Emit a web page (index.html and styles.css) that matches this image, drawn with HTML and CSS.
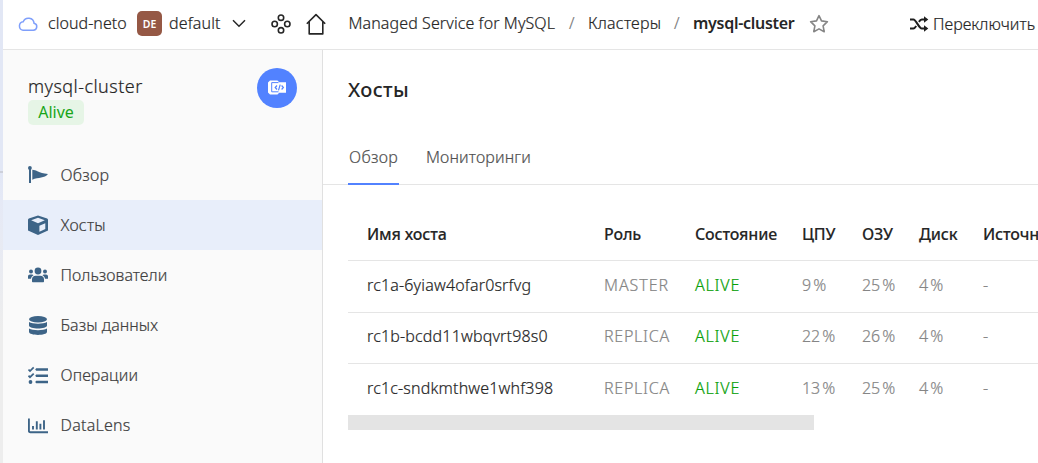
FILE: index.html
```html
<!DOCTYPE html>
<html lang="ru">
<head>
<meta charset="utf-8">
<title>mysql-cluster</title>
<link rel="stylesheet" href="styles.css">
</head>
<body>
<div class="edge"><span class="edge-mark"></span></div>
<div class="app">
  <header class="topbar">
    <svg class="cloud" width="20" height="16" viewBox="0 0 20 16"><path d="M5 14.2h10.2a3.5 3.5 0 0 0 .9-6.9 5.7 5.7 0 0 0-10.9-1.6A4.3 4.3 0 0 0 5 14.2z" fill="none" stroke="#7f9ffb" stroke-width="1.5"/></svg>
    <span class="t-cloud">cloud-neto</span>
    <span class="badge">DE</span>
    <span class="t-default">default</span>
    <svg class="chevron" width="14" height="9" viewBox="0 0 14 9"><path d="M1 1.2l6 6 6-6" fill="none" stroke="#262626" stroke-width="1.5"/></svg>
    <svg class="services" width="20" height="20" viewBox="0 0 20 20"><g fill="none" stroke="#262626" stroke-width="1.6"><circle cx="10" cy="3.7" r="2.7"/><circle cx="3.7" cy="10" r="2.7"/><circle cx="16.3" cy="10" r="2.7"/><circle cx="10" cy="16.3" r="2.7"/></g></svg>
    <svg class="home" width="20" height="22" viewBox="0 0 20 22"><path d="M.8 10.8L10 1.6l9.2 9.2M3.2 8.6v12.300h13.600V8.600" fill="none" stroke="#262626" stroke-width="1.6" stroke-linejoin="round"/></svg>
    <nav class="crumbs">
      <span class="t-service">Managed Service for MySQL</span>
      <span class="slash">/</span>
      <span class="t-clusters">Кластеры</span>
      <span class="slash slash-last">/</span>
      <b class="t-current">mysql-cluster</b>
    </nav>
    <svg class="star" width="20" height="20" viewBox="0 0 20 20"><path d="M10 1.6l2.5 5.3 5.9.8-4.3 4.1 1.1 5.9L10 14.9l-5.2 2.8 1.1-5.9L1.6 7.7l5.9-.8z" fill="none" stroke="#858585" stroke-width="1.6" stroke-linejoin="round"/></svg>
    <svg class="shuffle" width="19" height="16" viewBox="0 0 19 16"><path d="M0 3.500h3.400c2.800 0 5.400 9 8.400 9h3.400M0 12.500h3.400c1.200 0 2-1.100 2.800-2.400M8.900 5.900c.9-1.400 1.700-2.400 2.900-2.400h3.400" fill="none" stroke="#1f1f1f" stroke-width="2"/><path d="M14 .3l4.300 3.200L14 6.700zM14 9.300l4.300 3.200-4.300 3.200z" fill="#1f1f1f"/></svg>
    <span class="t-switch">Переключить</span>
  </header>
  <div class="body">
    <aside class="sidebar">
      <div class="cluster">
        <div>
          <div class="cluster-name">mysql-cluster</div>
          <span class="status">Alive</span>
        </div>
        <div class="logo">
          <svg width="18" height="16" viewBox="0 0 18 16"><path d="M2 .5h7.500l1.700 1.700H18v10.600h-6.800l-1.700 1.700H2L0 12.500v-10z" fill="#fff"/><path d="M10.500 2.600H3.700v9.200h6.800" fill="none" stroke="#5282ff" stroke-width="1"/><path d="M9 5.500L7.200 7.500 9 9.500M13.600 5.500l1.800 2-1.800 2M12.200 4.600l-1.700 5.800" fill="none" stroke="#5282ff" stroke-width="1.200"/></svg>
        </div>
      </div>
      <nav class="menu">
        <a class="item"><svg width="20" height="20" viewBox="0 0 20 20"><circle cx="1.900" cy="3" r="1.900"/><path d="M1 3h2v15H1zM4.300 4.700c4 0 6 3.100 15.700 4.400-3.500 4.600-9.500 3-15.700 5.700z"/></svg><span class="m1">Обзор</span></a>
        <a class="item active"><svg width="20" height="20" viewBox="0 0 20 20"><path fill-rule="evenodd" d="M10 .5l9.200 3 .8 1.100v10.900L10 20 0 15.500V4.600l.8-1.100zM10 2.800L3.200 5.300 10 8.200l6.800-2.900zM11.400 10.800v6l5.900-2.700V8.200z"/></svg><span class="m2">Хосты</span></a>
        <a class="item"><svg width="20" height="20" viewBox="0 0 20 20"><circle cx="10" cy="6" r="3.400"/><circle cx="3" cy="6.500" r="2"/><circle cx="17" cy="6.500" r="2"/><path d="M4 16.500v-2.200c0-2.200 1.500-3.500 3.500-3.500h5c2 0 3.500 1.300 3.500 3.500v2.200c0 .4-.3.700-.7.700H4.700c-.4 0-.7-.3-.7-.7zM0 13.700v-2.200c0-1.200.8-2 2-2h2c.7 0 1.100.2 1.500.7-1.500.8-2.300 2-2.500 3.500zM20 13.700v-2.200c0-1.200-.8-2-2-2h-2c-.7 0-1.100.2-1.500.7 1.500.8 2.300 2 2.500 3.500z"/></svg><span class="m3">Пользователи</span></a>
        <a class="item"><svg width="20" height="20" viewBox="0 0 20 20"><ellipse cx="10" cy="4.200" rx="9" ry="3.200"/><path d="M1 7c3.500 2.300 14.500 2.300 18 0v3.600c0 4-18 4-18 0zM1 13.400c3.500 2.300 14.500 2.300 18 0v3.400c0 4.200-18 4.200-18 0z"/></svg><span class="m4">Базы данных</span></a>
        <a class="item"><svg width="20" height="20" viewBox="0 0 20 20"><path d="M8.200 3.300H20v2.400H8.200l-1-1.200zM8.200 9.500H20v2.400H8.200l-1-1.200zM8.200 15.800H20v2.400H8.200l-1-1.200z"/><circle cx="2.500" cy="17" r="1.900"/><path d="M.5 4.500L2 6l3.700-3.600M.5 10.700L2 12.200l3.700-3.600" fill="none" stroke="#3d6487" stroke-width="1.700"/></svg><span class="m5">Операции</span></a>
        <a class="item"><svg width="20" height="20" viewBox="0 0 20 20"><path d="M.9 3.500v12.300c0 .9.500 1.400 1.400 1.400H20M5 14.600v-3.500M8.800 14.600V6.200M12.400 14.600V8.700M16 14.600V5.200" fill="none" stroke="#3d6487" stroke-width="1.900"/></svg><span class="m6">DataLens</span></a>
      </nav>
    </aside>
    <main class="content">
      <h1>Хосты</h1>
      <div class="tabs"><span class="tab selected"><span class="tab1">Обзор</span></span><span class="tab"><span class="tab2">Мониторинги</span></span></div>
      <div class="table">
        <div class="row head"><span class="h1c">Имя хоста</span><span class="h2c">Роль</span><span class="h3c">Состояние</span><span>ЦПУ</span><span>ОЗУ</span><span>Диск</span><span>Источн</span></div>
        <div class="row first"><span class="host">rc1a-6yiaw4ofar0srfvg</span><span class="role master">MASTER</span><span class="alive">ALIVE</span><span class="num">9 %</span><span class="num">25 %</span><span class="num">4 %</span><span>-</span></div>
        <div class="row second"><span class="host">rc1b-bcdd11wbqvrt98s0</span><span class="role">REPLICA</span><span class="alive">ALIVE</span><span class="num">22 %</span><span class="num">26 %</span><span class="num">4 %</span><span>-</span></div>
        <div class="row last"><span class="host">rc1c-sndkmthwe1whf398</span><span class="role">REPLICA</span><span class="alive">ALIVE</span><span class="num">13 %</span><span class="num">25 %</span><span class="num">4 %</span><span>-</span></div>
      </div>
      <div class="scroll"></div>
    </main>
  </div>
</div>
</body>
</html>
```
FILE: styles.css
```css
* { box-sizing: border-box; }
body { margin: 0; width: 1038px; height: 463px; overflow: hidden; display: flex; font: 300 16px/20px "Noto Sans", sans-serif; -webkit-text-stroke: 0.2px currentColor; color: #262626; background: #fff; white-space: nowrap; }
svg { display: block; flex: none; }
.edge { width: 3px; flex: none; background: linear-gradient(#e2e7f5 0 170px, #e5e9f6 200px, #ededed 330px); padding-top: 171px; }
.edge-mark { display: block; height: 2px; background: #cdd0da; }
.app { width: 1035px; flex: none; display: flex; flex-direction: column; }
.topbar { height: 50px; border-bottom: 1px solid #e5e5e5; display: flex; align-items: center; padding: 0 0 2px 15px; overflow: hidden; }
.topbar > * { flex: none; }
.t-cloud { width: 79px; margin-left: 10px; letter-spacing: 0.05px; }
.badge { width: 25px; height: 25px; margin-left: 10px; border-radius: 5px; background: #955845; color: #fff; font-size: 10.5px; line-height: 26px; font-weight: 600; text-align: center; -webkit-text-stroke: 0; }
.t-default { width: 51px; margin-left: 7px; letter-spacing: 0.15px; }
.chevron { margin-left: 12px; }
.services { margin-left: 25px; }
.home { margin-left: 15px; }
.crumbs { display: flex; margin-left: 22.5px; width: 446.5px; }
.t-service { width: 207px; letter-spacing: 0.1px; }
.slash { width: 8px; margin-left: 13.5px; color: #777; }
.t-clusters { width: 74px; margin-left: 11px; letter-spacing: 0.25px; }
.slash-last { margin-left: 12px; }
.t-current { margin-left: 11px; font-weight: 600; letter-spacing: -0.28px; -webkit-text-stroke: 0; }
.t-cloud, .t-default, .crumbs { margin-top: -1px; }
.star { margin-left: 14px; }
.shuffle { margin-left: 81px; }
.t-switch { margin-left: 4px; letter-spacing: 0.05px; }
.body { flex: 1; display: flex; }
.sidebar { width: 320px; flex: none; background: #fafafa; border-right: 1px solid #e0e0e0; }
.cluster { height: 100px; padding: 18px 25px 0; display: flex; justify-content: space-between; }
.cluster-name { font-size: 18px; line-height: 24px; margin-top: 6px; letter-spacing: 0.45px; }
.status { display: block; width: 56px; height: 25px; margin-top: 2px; border-radius: 5px; background: #e6f5e6; color: #18a518; text-align: center; line-height: 24px; font-weight: 400; -webkit-text-stroke: 0; }
.logo { width: 40px; height: 40px; border-radius: 50%; background: #5282ff; display: grid; place-items: center; }
.item { height: 50px; display: flex; align-items: center; gap: 12.5px; padding-left: 25px; color: #404040; letter-spacing: 0.25px; }
.item svg { fill: #3d6487; }
.item.active { background: #e8eefa; }
.m3, .m4 { letter-spacing: 0.05px; }
.m5 { letter-spacing: 0.12px; }
.content { width: 715px; overflow: hidden; }
h1 { margin: 0; padding: 26px 0 0 25px; height: 87px; font-size: 20px; line-height: 28px; font-weight: 500; letter-spacing: 0.4px; -webkit-text-stroke: 0; }
.tabs { height: 48px; display: flex; gap: 26px; padding-left: 25px; border-bottom: 1px solid #e5e5e5; color: #505050; }
.tab { height: 48px; padding: 10px 1px 0; }
.tab.selected { width: 51px; border-bottom: 2px solid #5282ff; }
.tab1 { letter-spacing: 0.35px; }
.tab2 { letter-spacing: 0.15px; }
.table { margin-left: 25px; padding-top: 24px; width: 690px; overflow: hidden; }
.row { height: 51px; padding: 14px 0 0 19px; border-bottom: 1px solid #e5e5e5; display: grid; grid-template-columns: 237px 91px 107px 60px 57px 64px 55px; color: #858585; }
.row.head { height: 52px; padding-top: 15px; color: #262626; font-weight: 500; letter-spacing: -0.15px; -webkit-text-stroke: 0.1px currentColor; }
.row.first { height: 52px; }
.row.second { padding-top: 13px; }
.row.last { border: 0; }
.host { color: #262626; letter-spacing: 0.17px; }
.role { letter-spacing: 0.75px; }
.master { letter-spacing: 0.95px; }
.alive { color: #08a008; letter-spacing: 0.8px; }
.num { word-spacing: -1.7px; letter-spacing: -0.2px; }
.scroll { width: 466px; height: 15px; margin-left: 25px; background: #e4e4e4; }
```
